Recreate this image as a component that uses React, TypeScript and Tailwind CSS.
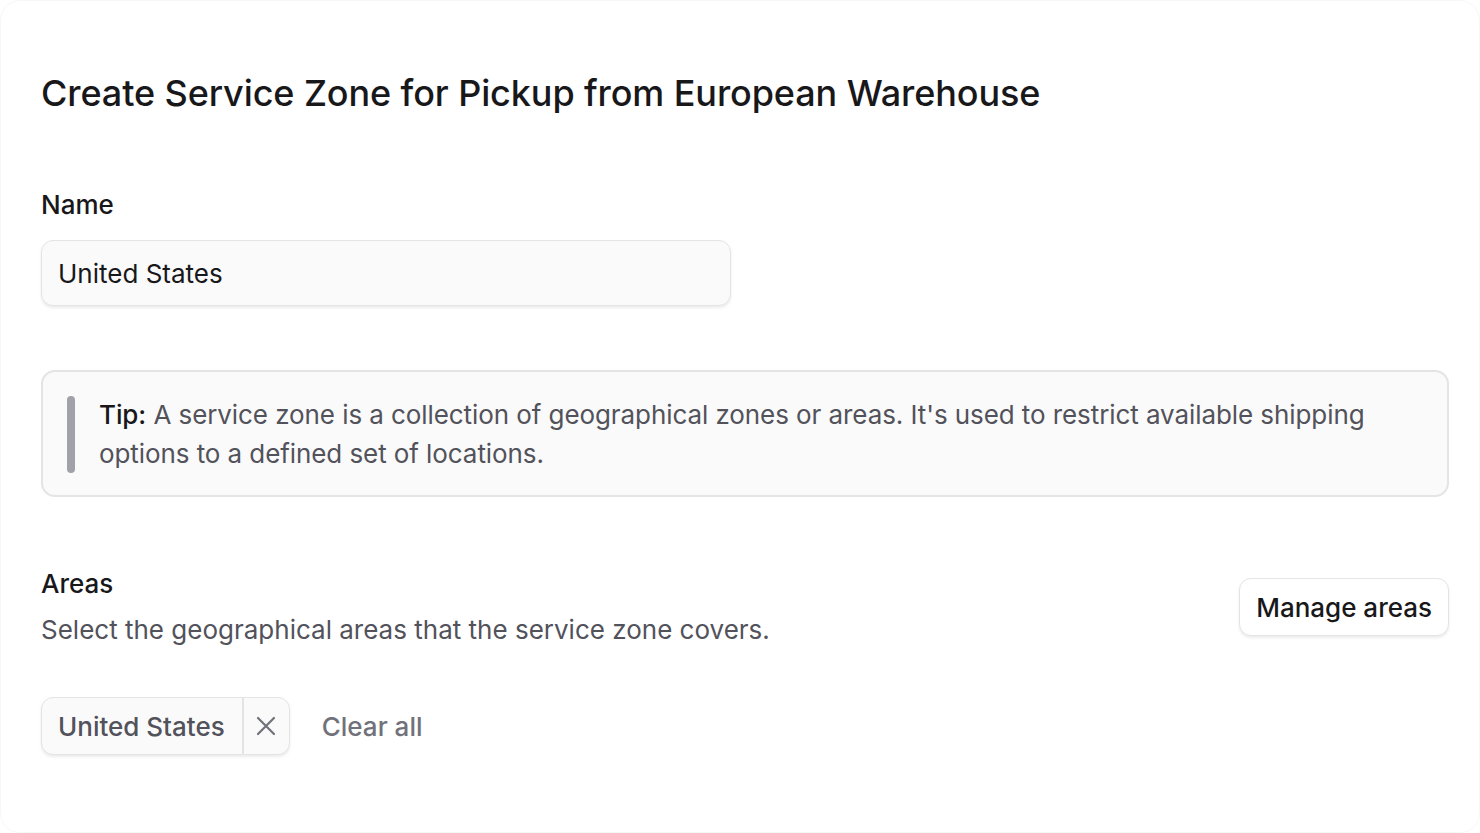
import React from 'react';

const font = { fontFamily: 'Inter, "Noto Sans", sans-serif' };

const XIcon = () => (
  <svg width="22" height="22" viewBox="0 0 22 22" fill="none" stroke="currentColor" strokeWidth="2.2" strokeLinecap="round">
    <path d="M3 3L19 19M19 3L3 19" />
  </svg>
);

export default function App() {
  return (
    <div className="h-[833px] w-full bg-white" style={font}>
      <div className="h-full w-full rounded-[20px] border border-[#f7f7f7] pl-[40px] pr-[30px] pt-[72px]">
        <h1 className="text-[36px] leading-[40px] font-medium text-[#18181b] tracking-[-0.1px]">
          Create Service Zone for Pickup from European Warehouse
        </h1>

        {/* Name */}
        <div className="mt-[74px]">
          <label className="block text-[26px] leading-[36px] font-medium text-[#18181b]">Name</label>
          <div className="mt-[17px] flex h-[66px] w-[690px] items-center rounded-[12px] border border-[#e4e4e7] bg-[#fafafa] px-[16px] shadow-[0_2px_3px_rgba(0,0,0,0.08)]">
            <span className="text-[26px] text-[#18181b]">United States</span>
          </div>
        </div>

        {/* Tip */}
        <div className="mt-[64px] flex gap-[24px] rounded-[14px] border-2 border-[#e4e4e7] bg-[#fafafa] pb-[22px] pl-[24px] pr-[24px] pt-[23px]">
          <div className="mt-[1px] h-[77px] w-[8px] shrink-0 rounded-full bg-[#a1a1aa]" />
          <p className="text-[26px] leading-[39px] tracking-[-0.08px] text-[#52525b]">
            <span className="font-medium text-[#18181b]">Tip:</span> A service zone is a collection of geographical zones or areas. It's used to restrict available shipping options to a defined set of locations.
          </p>
        </div>

        {/* Areas */}
        <div className="mt-[69px] flex items-center justify-between">
          <div>
            <div className="text-[26px] leading-[36px] font-medium text-[#18181b]">Areas</div>
            <div className="mt-[10px] text-[26px] leading-[36px] text-[#52525b]">
              Select the geographical areas that the service zone covers.
            </div>
          </div>
          <button className="flex h-[58px] items-center rounded-[12px] border border-[#e4e4e7] bg-white px-[16px] text-[26px] font-medium text-[#18181b] shadow-[0_2px_3px_rgba(0,0,0,0.08)]">
            Manage areas
          </button>
        </div>

        <div className="mt-[49px] flex items-center gap-[32px]">
          <div className="flex h-[58px] items-stretch rounded-[12px] border border-[#e4e4e7] bg-[#fafafa] shadow-[0_2px_3px_rgba(0,0,0,0.08)]">
            <span className="flex items-center pl-[16px] pr-[17px] text-[26px] font-medium text-[#52525b]">United States</span>
            <span className="flex w-[47px] items-center justify-center border-l-2 border-[#e4e4e7] text-[#71717a]">
              <XIcon />
            </span>
          </div>
          <span className="text-[26px] font-medium text-[#71717a]">Clear all</span>
        </div>
      </div>
    </div>
  );
}
